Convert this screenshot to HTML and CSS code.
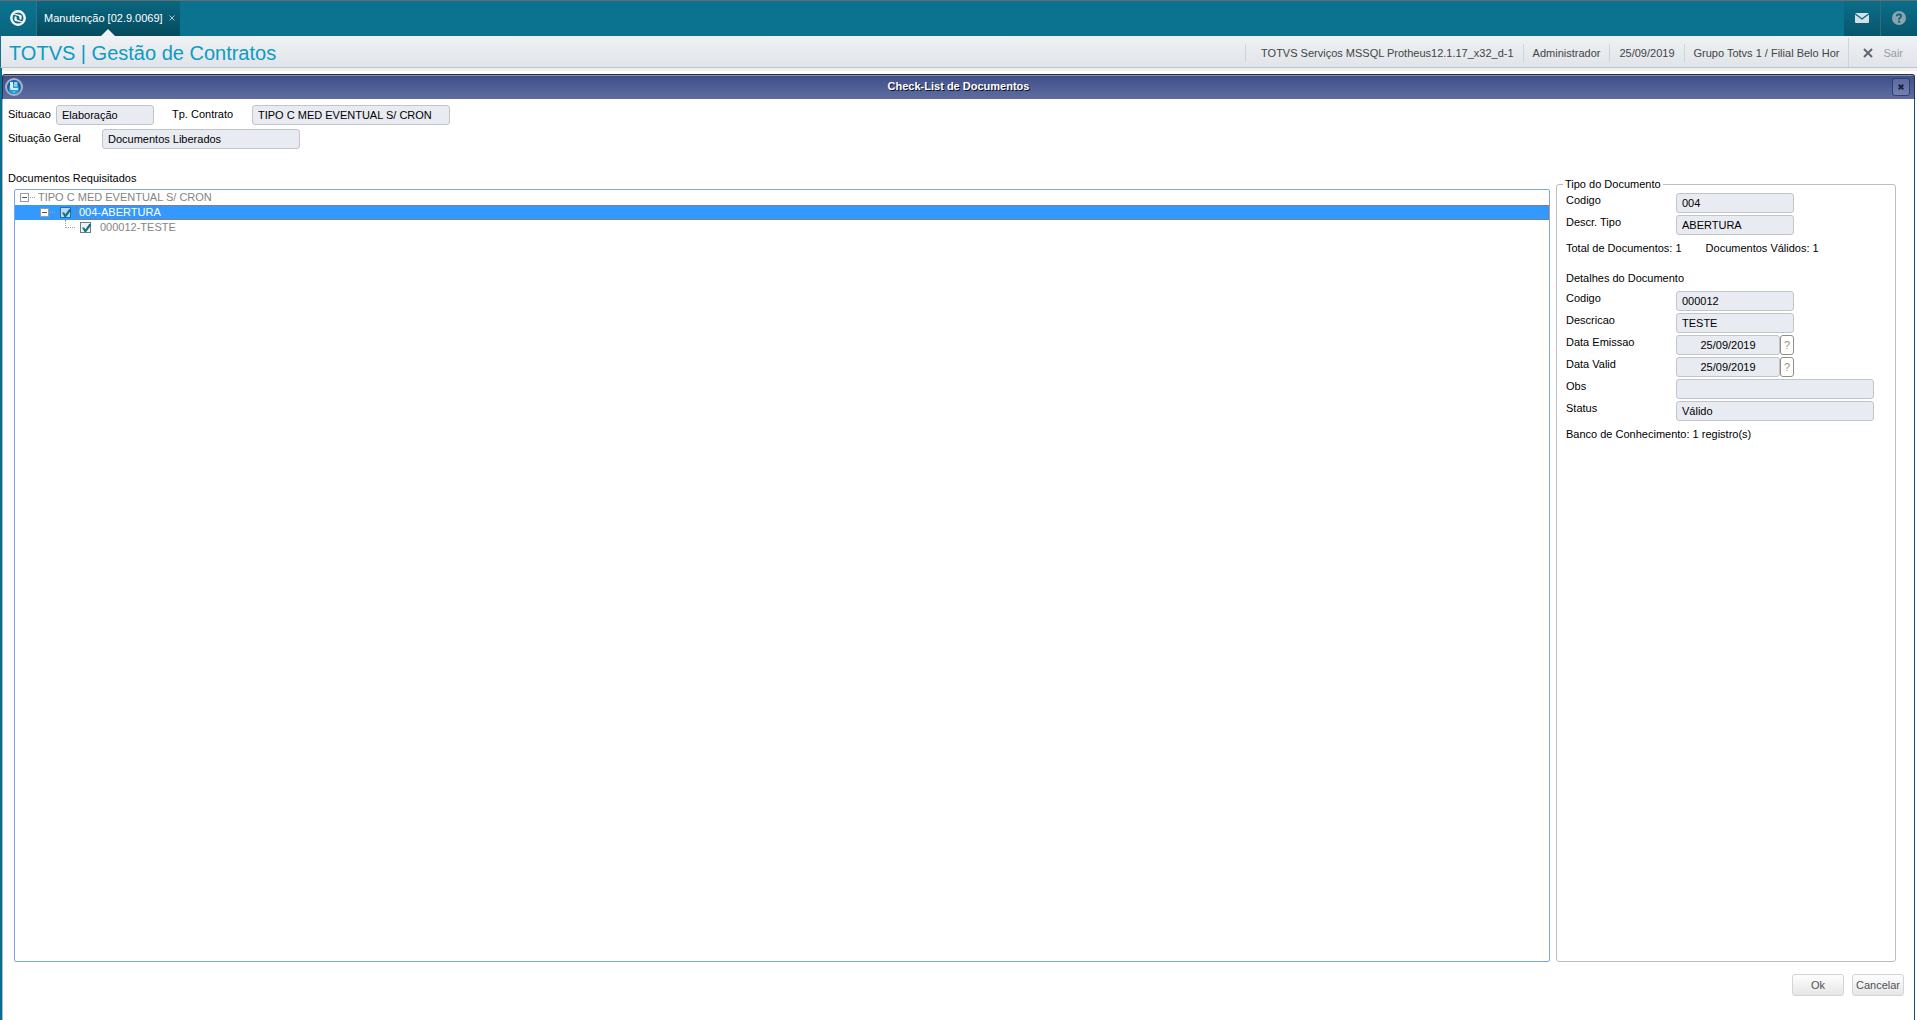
FILE: index.html
```html
<!DOCTYPE html>
<html lang="pt-BR">
<head>
    <meta charset="UTF-8">
    <meta name="viewport" content="width=device-width, initial-scale=1.0">
    <title>TOTVS | Gestão de Contratos</title>
    <link rel="stylesheet" href="styles.css">
</head>
<body>

<!-- Top bar -->
<nav class="topbar">
    <button type="button" class="logo" aria-label="TOTVS">
        <svg width="16" height="16" viewBox="0 0 16 16">
            <circle cx="8" cy="8" r="6.7" fill="none" stroke="#fff" stroke-width="2.4"/>
            <path d="M3 4.6l3-.6 4.6 1q1.2.4 1.1 1.6l-.4 3.2-1.8-.5-.2-2.3q0-.7-.8-.9z" fill="#fff"/>
            <path d="M13 11.4l-3 .6-4.6-1q-1.2-.4-1.1-1.6l.4-3.2 1.8.5.2 2.3q0 .7.8.9z" fill="#fff"/>
        </svg>
    </button>
    <div class="tab">
        <span>Manutenção [02.9.0069]</span>
        <button type="button" class="tab-close" aria-label="Fechar aba">
            <svg width="6" height="6" viewBox="0 0 6 6"><path d="M.5.5l5 5m0-5l-5 5" stroke="#a9cbd4"/></svg>
        </button>
    </div>
    <div class="tools">
        <button type="button" class="tool" aria-label="Mensagens">
            <svg width="14" height="10" viewBox="0 0 14 10">
                <rect width="14" height="10" rx="1" fill="#d3e1e6"/>
                <path d="M0 .8l7 5.2 7-5.2" fill="none" stroke="#0a6580" stroke-width="1.3"/>
            </svg>
        </button>
        <button type="button" class="tool" aria-label="Ajuda">
            <svg width="14" height="14" viewBox="0 0 14 14">
                <circle cx="7" cy="7" r="7" fill="#8aa3ae"/>
                <path d="M4.8 5.3q0-2 2.2-2t2.2 1.8q0 1-1.1 1.7T7 8.7" fill="none" stroke="#0a5f78" stroke-width="1.7"/>
                <rect x="6" y="9.8" width="2" height="1.8" fill="#0a5f78"/>
            </svg>
        </button>
    </div>
</nav>

<!-- Module header -->
<header class="header">
    <h1>TOTVS | Gestão de Contratos</h1>
    <div class="session">
        <span>TOTVS Serviços MSSQL Protheus12.1.17_x32_d-1</span>
        <span>Administrador</span>
        <span>25/09/2019</span>
        <span>Grupo Totvs 1 / Filial Belo Hor</span>
    </div>
    <button type="button" class="exit">
        <svg width="10" height="10" viewBox="0 0 10 10"><path d="M1 1l8 8m0-8l-8 8" stroke="#5f6872" stroke-width="2"/></svg>
        Sair
    </button>
</header>

<!-- Dialog -->
<main class="dialog">
    <div class="titlebar">
        <svg class="dialog-icon" width="18" height="18" viewBox="0 0 18 18">
            <circle cx="9" cy="9" r="8" fill="#1264b0" stroke="#aab3c4" stroke-width="2"/>
            <circle cx="9" cy="11" r="5" fill="#2b9be0"/>
            <path d="M5 4h3v6h5v2H7q-2 0-2-2z" fill="#d7efff"/>
            <path d="M9 4h3.500v4.500H9z" fill="#8fd0f7"/>
            <path d="M7.500 13.500h3L9 15z" fill="#8fe0ff"/>
        </svg>
        <h2>Check-List de Documentos</h2>
        <button type="button" class="dialog-close" aria-label="Fechar">
            <svg width="6" height="6" viewBox="0 0 6 6"><path d="M.7.7l4.6 4.6m0-4.6L.7 5.3" stroke="#1b2440" stroke-width="2"/></svg>
        </button>
    </div>

    <form class="content" onsubmit="event.preventDefault();">
        <div class="row">
            <label class="w-short" for="situacao">Situacao</label>
            <input class="field small" type="text" id="situacao" value="Elaboração" readonly>
            <label class="w-contract" for="contrato">Tp. Contrato</label>
            <input class="field large" type="text" id="contrato" value="TIPO C MED EVENTUAL S/ CRON" readonly>
        </div>
        <div class="row">
            <label class="w-general" for="geral">Situação Geral</label>
            <input class="field large" type="text" id="geral" value="Documentos Liberados" readonly>
        </div>

        <div class="panels">
            <section class="documents">
                <h3>Documentos Requisitados</h3>
                <ul class="tree">
                    <li>
                        <div class="node">
                            <button type="button" class="toggle" aria-label="Recolher"></button>
                            <span class="node-text">TIPO C MED EVENTUAL S/ CRON</span>
                        </div>
                        <ul>
                            <li>
                                <div class="node level-2 selected">
                                    <button type="button" class="toggle" aria-label="Recolher"></button>
                                    <input type="checkbox" id="doc004" checked>
                                    <label class="node-text" for="doc004">004-ABERTURA</label>
                                </div>
                                <ul>
                                    <li>
                                        <div class="node level-3">
                                            <span class="branch"></span>
                                            <input type="checkbox" id="doc12" checked>
                                            <label class="node-text" for="doc12">000012-TESTE</label>
                                        </div>
                                    </li>
                                </ul>
                            </li>
                        </ul>
                    </li>
                </ul>
            </section>

            <fieldset class="details">
                <legend>Tipo do Documento</legend>
                <div class="grid">
                    <label for="tipoCodigo">Codigo</label>
                    <input class="field medium" type="text" id="tipoCodigo" value="004" readonly>
                    <label for="tipoDescr">Descr. Tipo</label>
                    <input class="field medium" type="text" id="tipoDescr" value="ABERTURA" readonly>
                </div>
                <p class="totals"><span>Total de Documentos: 1</span><span>Documentos Válidos: 1</span></p>
                <h3>Detalhes do Documento</h3>
                <div class="grid">
                    <label for="docCodigo">Codigo</label>
                    <input class="field medium" type="text" id="docCodigo" value="000012" readonly>
                    <label for="docDescr">Descricao</label>
                    <input class="field medium" type="text" id="docDescr" value="TESTE" readonly>
                    <label for="emissao">Data Emissao</label>
                    <div class="date">
                        <input class="field" type="text" id="emissao" value="25/09/2019" readonly>
                        <button type="button" class="picker">?</button>
                    </div>
                    <label for="valid">Data Valid</label>
                    <div class="date">
                        <input class="field" type="text" id="valid" value="25/09/2019" readonly>
                        <button type="button" class="picker">?</button>
                    </div>
                    <label for="obs">Obs</label>
                    <input class="field large" type="text" id="obs" readonly>
                    <label for="status">Status</label>
                    <input class="field large" type="text" id="status" value="Válido" readonly>
                </div>
                <p class="bank">Banco de Conhecimento: 1 registro(s)</p>
            </fieldset>
        </div>

        <div class="actions">
            <button type="submit" class="btn">Ok</button>
            <button type="button" class="btn">Cancelar</button>
        </div>
    </form>
</main>

</body>
</html>
```

FILE: styles.css
```css
* {
    box-sizing: border-box;
}

body {
    margin: 0;
    min-height: 100vh;
    display: flex;
    flex-direction: column;
    background: #fff;
    color: #000;
    font-family: "Liberation Sans", Arial, sans-serif;
    font-size: 11px;
    line-height: 14px;
}

h1, h2, h3, p, ul {
    margin: 0;
    padding: 0;
}

h3 {
    font-size: 11px;
    font-weight: normal;
}

ul {
    list-style: none;
}

button, input {
    margin: 0;
    font: inherit;
}

button {
    display: flex;
    align-items: center;
    justify-content: center;
    padding: 0;
    border: none;
    background: none;
    cursor: pointer;
}

/* Top bar */
.topbar {
    display: flex;
    height: 36px;
    border-top: 1px solid #6c6a6e;
    background: #0b738f;
}

.logo {
    width: 37px;
    padding-bottom: 2px;
    border-right: 1px solid #2d7488;
    background: linear-gradient(#0b738f, #096580);
}

.tab {
    position: relative;
    display: flex;
    align-items: center;
    gap: 6px;
    padding: 0 5px 2px 7px;
    background: linear-gradient(#0a6882, #054a5c);
    color: #fff;
}

.tab::after {
    content: "";
    position: absolute;
    left: 50%;
    bottom: 0;
    margin-left: -7px;
    border: 7px solid transparent;
    border-top: 0;
    border-bottom-color: #eef0f2;
}

.tab-close {
    height: 14px;
}

.tools {
    display: flex;
    margin-left: auto;
}

.tool {
    width: 36px;
    padding-bottom: 2px;
    background: linear-gradient(#0b6e89, #07566c);
}

.tool + .tool {
    width: 37px;
    border-left: 1px solid #3a6877;
}

/* Module header */
.header {
    display: flex;
    align-items: center;
    height: 32px;
    padding-top: 2px;
    border-left: 1px solid #0b738f;
    border-bottom: 1px solid #bcc6cd;
    background: linear-gradient(#f0f2f4, #e0e4e9);
    color: #444;
}

.header h1 {
    padding-left: 8px;
    color: #0b9bc4;
    font-size: 20px;
    font-weight: normal;
    line-height: 24px;
}

.session {
    display: flex;
    margin-left: auto;
}

.session span {
    padding: 2px 9px;
    border-left: 1px solid #cfd5d6;
}

.session span:first-child {
    padding-left: 15px;
}

.exit {
    align-self: stretch;
    gap: 10px;
    padding: 0 14px;
    border-left: 1px solid #cfd5d6;
    color: #999da5;
}

/* Dialog */
.dialog {
    flex: 1;
    display: flex;
    flex-direction: column;
    padding: 6px 2px 0 0;
    border-left: 2px solid #0b6e8e;
    background: linear-gradient(#f0f0f1 3px, #fff 3px);
}

.titlebar {
    position: relative;
    display: flex;
    align-items: center;
    justify-content: center;
    height: 25px;
    padding-bottom: 2px;
    border: 1px solid #2c3040;
    border-bottom: 0;
    border-radius: 3px 3px 0 0;
    background: linear-gradient(#8890ab 1px, #3f4f89 1px, #5f6da0);
}

.titlebar h2 {
    color: #fff;
    font-size: 11px;
    line-height: 14px;
    text-shadow: 1px 1px #10131f;
}

.dialog-icon {
    position: absolute;
    left: 2px;
    top: 3px;
}

.dialog-close {
    position: absolute;
    right: 4px;
    top: 3px;
    width: 18px;
    height: 18px;
    border: 1px solid #2c4079;
    border-radius: 3px;
    background: linear-gradient(#5b699f, #7580ac);
}

.content {
    flex: 1;
    display: flex;
    flex-direction: column;
    padding: 6px 10px 24px 5px;
    border-left: 1px solid #a9bccb;
    border-right: 1px solid #14507f;
}

.row {
    display: flex;
    margin-bottom: 4px;
}

.w-short {
    width: 48px;
}

.w-contract {
    width: 80px;
}

.w-general {
    width: 94px;
}

.row label {
    padding-top: 2px;
}

.field {
    height: 20px;
    padding: 0 5px;
    border: 1px solid #c1c5c8;
    border-radius: 3px;
    background: #e8ebf2;
    color: #000;
    outline: none;
}

.small {
    width: 98px;
    margin-right: 18px;
}

.medium {
    width: 118px;
}

.large {
    width: 198px;
}

.panels {
    flex: 1;
    display: flex;
    gap: 6px;
    padding-right: 8px;
}

.documents {
    flex: 1;
    display: flex;
    flex-direction: column;
    padding-top: 18px;
}

.documents h3 {
    margin-bottom: 4px;
}

/* Document tree */
.tree {
    flex: 1;
    margin-left: 6px;
    border: 1px solid #7aa7f0;
    border-radius: 2px;
    color: #848484;
}

.node {
    display: flex;
    align-items: center;
    height: 15px;
    padding-left: 5px;
    line-height: 13px;
}

.level-2 {
    padding-left: 25px;
}

.level-3 {
    padding-left: 50px;
}

.toggle {
    position: relative;
    width: 9px;
    height: 9px;
    border: 1px solid #9b9b9b;
    background: linear-gradient(#555, #555) center / 5px 1px no-repeat #fff;
}

.toggle::after {
    content: "";
    position: absolute;
    left: 9px;
    top: 3px;
    width: 5px;
    border-top: 1px dotted #a0a0a0;
}

.branch {
    align-self: flex-start;
    width: 10px;
    height: 8px;
    border: 1px dotted #a0a0a0;
    border-width: 0 0 1px 1px;
}

.node input {
    position: relative;
    appearance: none;
    width: 11px;
    height: 11px;
    margin-left: 11px;
    border: 1px solid #6d7d83;
    background: #eef3f4;
}

.level-3 input {
    margin-left: 5px;
}

.node input:checked::after {
    content: "";
    position: absolute;
    left: 1px;
    top: 1px;
    width: 9px;
    height: 8px;
    background: #16717c;
    clip-path: polygon(0 45%, 22% 45%, 38% 65%, 80% 0, 100% 0, 100% 20%, 45% 100%, 28% 100%);
}

.selected {
    background: #3399ff;
    color: #fff;
}

.selected input {
    border-color: #2c6da8;
    background: #b9d9f5;
}

.node-text {
    padding-left: 9px;
}

.selected input + .node-text {
    flex: 1;
    margin-left: 5px;
    padding-left: 2px;
    border: 1px dotted #c2672c;
}

/* Document details */
.details {
    width: 340px;
    margin: 24px 0 0;
    padding: 2px 9px;
    border: 1px solid #bdbdbd;
    border-radius: 3px;
}

.details legend {
    margin-left: -3px;
    padding: 0 2px;
}

.grid {
    display: grid;
    grid-template-columns: 110px 1fr;
    row-gap: 2px;
    justify-items: start;
}

.totals {
    display: flex;
    gap: 24px;
    margin: 6px 0 16px;
}

.details h3 {
    margin-bottom: 6px;
}

.date {
    display: flex;
}

.date .field {
    width: 104px;
    text-align: center;
}

.picker {
    width: 14px;
    height: 20px;
    border: 1px solid #8e8e8e;
    border-radius: 3px;
    background: #fff;
    color: #a09080;
}

.bank {
    margin-top: 6px;
}

/* Footer buttons */
.actions {
    display: flex;
    justify-content: flex-end;
    gap: 8px;
    margin-top: 12px;
}

.btn {
    width: 52px;
    height: 22px;
    border: 1px solid #d4d4d4;
    border-radius: 3px;
    background: linear-gradient(#fefefe, #e6e6e6);
    color: #4e5257;
}
```
